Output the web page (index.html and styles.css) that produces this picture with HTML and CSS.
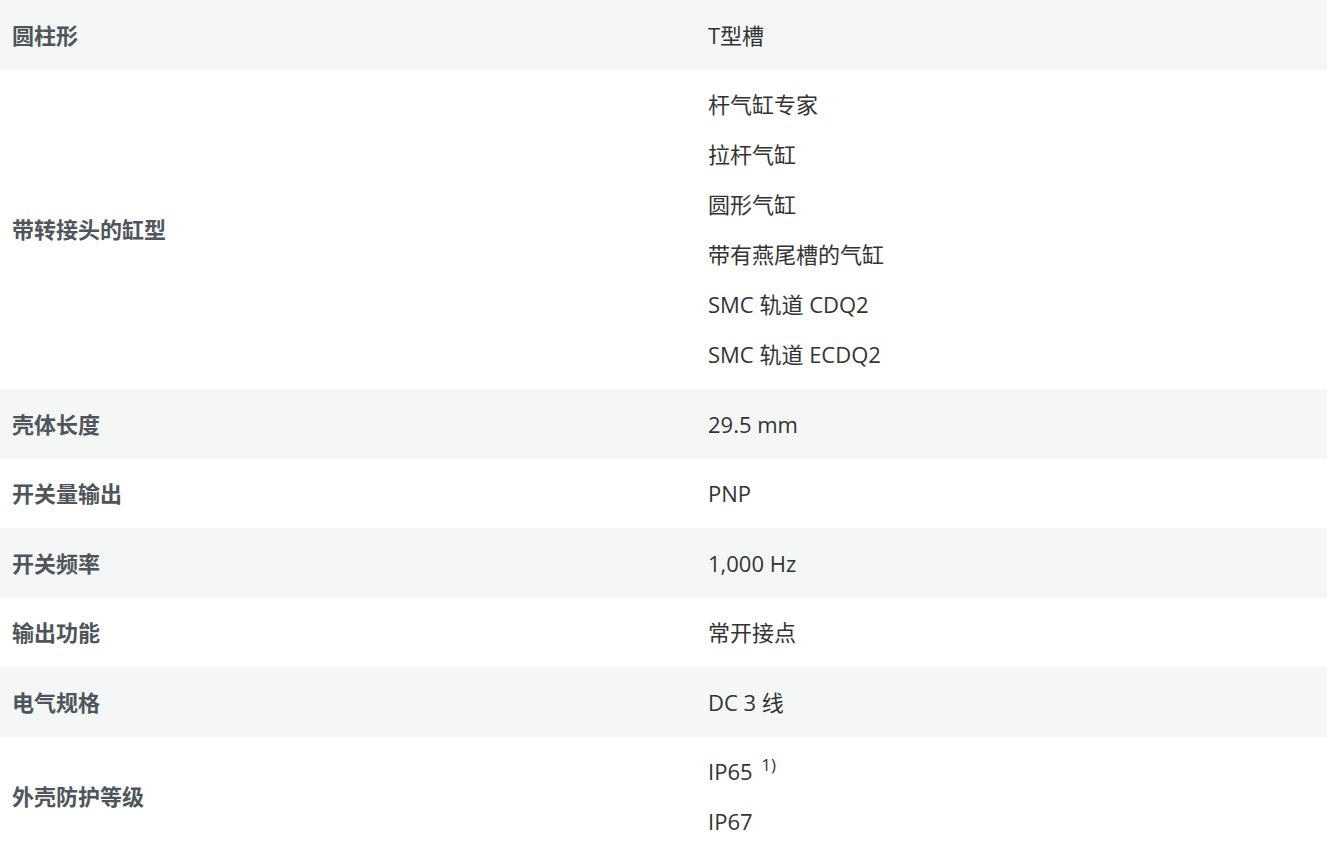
FILE: index.html
```html
<!DOCTYPE html>
<html lang="zh-CN">
<head>
<meta charset="utf-8">
<title>技术数据</title>
<link rel="stylesheet" href="styles.css">
</head>
<body>
<table class="spec">
  <tbody>
    <tr class="alt">
      <th class="label">圆柱形</th>
      <td class="value"><div class="item">T型槽</div></td>
    </tr>
    <tr>
      <th class="label">带转接头的缸型</th>
      <td class="value">
        <div class="item">杆气缸专家</div>
        <div class="item">拉杆气缸</div>
        <div class="item">圆形气缸</div>
        <div class="item">带有燕尾槽的气缸</div>
        <div class="item">SMC 轨道 CDQ2</div>
        <div class="item">SMC 轨道 ECDQ2</div>
      </td>
    </tr>
    <tr class="alt">
      <th class="label">壳体长度</th>
      <td class="value"><div class="item">29.5 mm</div></td>
    </tr>
    <tr>
      <th class="label">开关量输出</th>
      <td class="value"><div class="item">PNP</div></td>
    </tr>
    <tr class="alt">
      <th class="label">开关频率</th>
      <td class="value"><div class="item">1,000 Hz</div></td>
    </tr>
    <tr>
      <th class="label">输出功能</th>
      <td class="value"><div class="item">常开接点</div></td>
    </tr>
    <tr class="alt">
      <th class="label">电气规格</th>
      <td class="value"><div class="item">DC 3 线</div></td>
    </tr>
    <tr>
      <th class="label">外壳防护等级</th>
      <td class="value">
        <div class="item">IP65 <sup class="note">1)</sup></div>
        <div class="item">IP67</div>
      </td>
    </tr>
  </tbody>
</table>
</body>
</html>
```
FILE: styles.css
```css
html, body {
  margin: 0;
  padding: 0;
  background: #ffffff;
}

body {
  font-family: "Open Sans", "Noto Sans CJK SC", sans-serif;
  font-size: 22px;
  color: #333333;
}

.spec {
  width: 100%;
  border-collapse: collapse;
  border-spacing: 0;
}

.spec tr.alt {
  background: #f5f7f7;
}

.label {
  width: 52.45%;
  text-align: left;
  vertical-align: middle;
  padding: 9.75px 12px;
  font-weight: 700;
  color: #4f555a;
  line-height: 30px;
}

.value {
  vertical-align: middle;
  padding: 9.75px 12px;
  font-weight: 400;
  color: #333333;
}

.item {
  line-height: 30px;
  padding: 10px 0;
}

.note {
  font-size: 17px;
  line-height: 0;
  vertical-align: 9px;
  margin-left: 3px;
}
```
